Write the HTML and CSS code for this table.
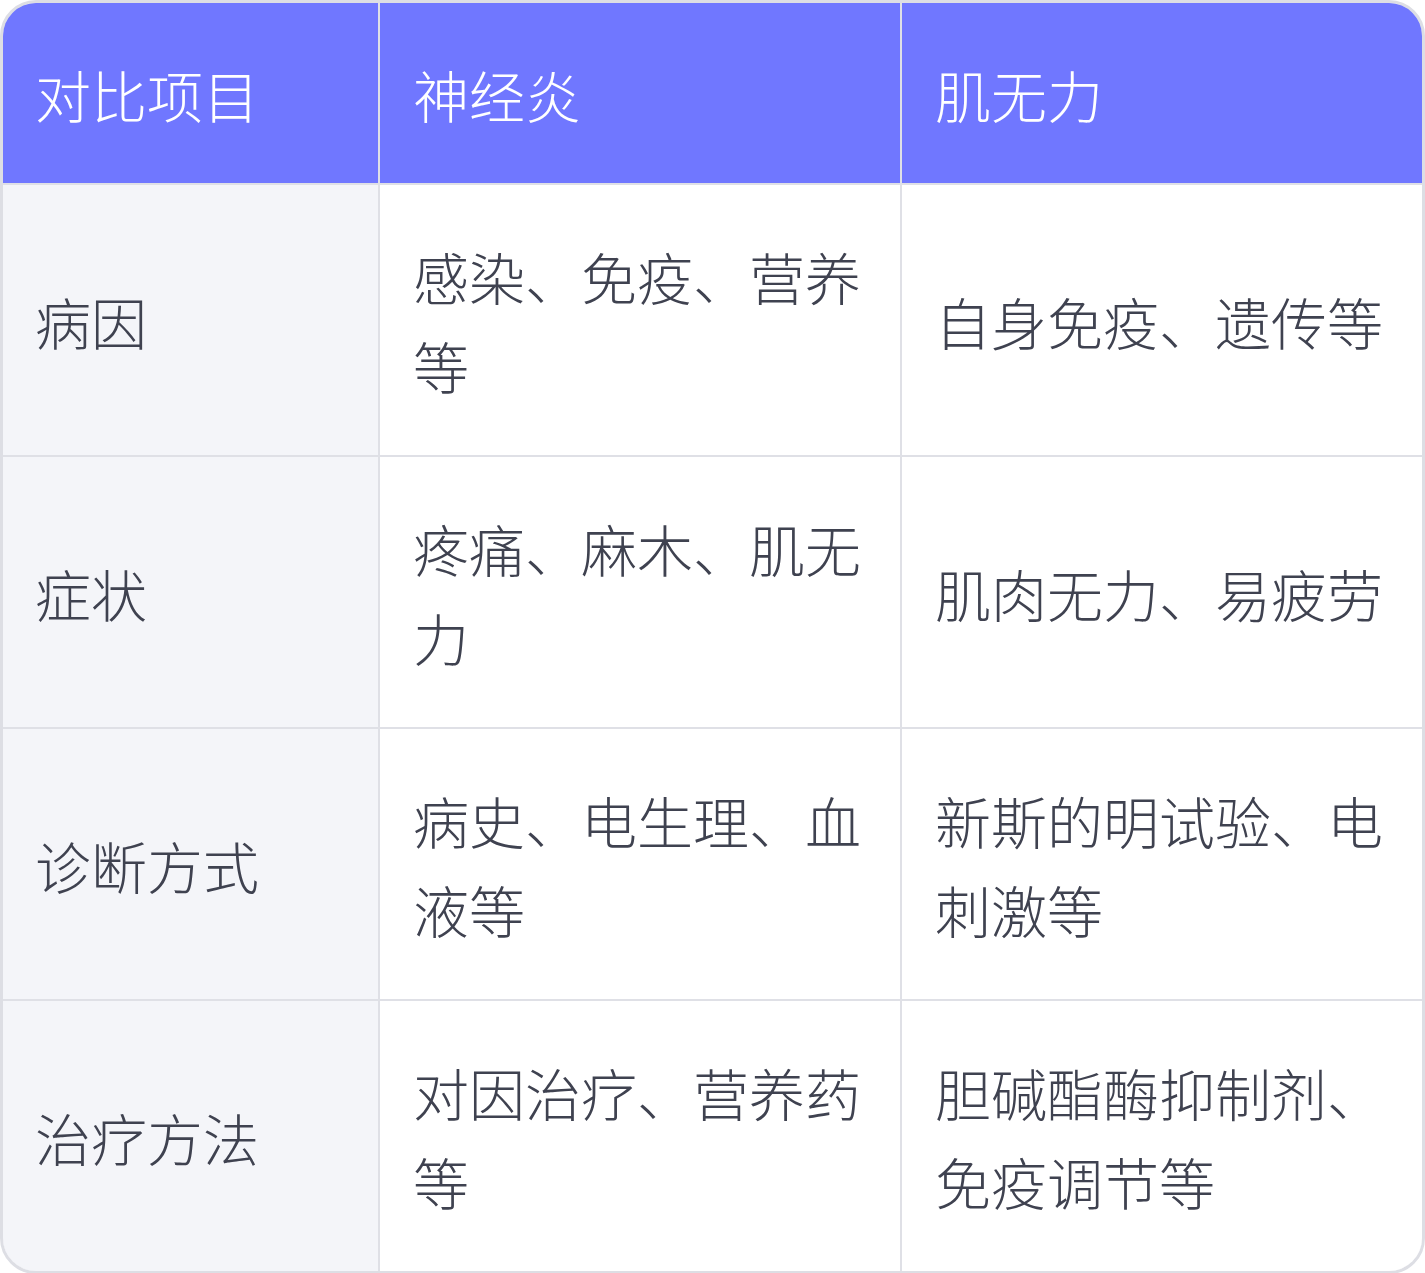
FILE: index.html
```html
<!DOCTYPE html>
<html lang="zh-CN">
<head>
<meta charset="utf-8">
<title>神经炎与肌无力对比</title>
<link rel="stylesheet" href="styles.css">
</head>
<body>
<div class="table-wrap">
  <div class="grid">
    <div class="cell head">对比项目</div>
    <div class="cell head">神经炎</div>
    <div class="cell head">肌无力</div>

    <div class="cell label">病因</div>
    <div class="cell">感染、免疫、营养等</div>
    <div class="cell">自身免疫、遗传等</div>

    <div class="cell label">症状</div>
    <div class="cell">疼痛、麻木、肌无力</div>
    <div class="cell">肌肉无力、易疲劳</div>

    <div class="cell label">诊断方式</div>
    <div class="cell">病史、电生理、血液等</div>
    <div class="cell">新斯的明试验、电刺激等</div>

    <div class="cell label">治疗方法</div>
    <div class="cell">对因治疗、营养药等</div>
    <div class="cell">胆碱酯酶抑制剂、免疫调节等</div>
  </div>
</div>
</body>
</html>
```

FILE: styles.css
```css
html, body {
  margin: 0;
  padding: 0;
  background: #ffffff;
}

.table-wrap {
  width: 1425px;
  box-sizing: border-box;
  border: 3px solid #dddee4;
  border-radius: 36px;
  overflow: hidden;
  font-family: "Noto Sans CJK SC", "Noto Sans", sans-serif;
  font-weight: 300;
}

.grid {
  display: grid;
  grid-template-columns: 375px 520px 520px;
  grid-auto-rows: 270px;
  grid-template-rows: 180px;
  gap: 2px;
  background: #dfe0e6;
}

.cell {
  background: #ffffff;
  color: #3f4250;
  font-size: 56px;
  line-height: 89px;
  padding: 0 30px 0 33px;
  display: flex;
  align-items: center;
}

.cell.label {
  background: #f4f5f9;
  padding-left: 32px;
}

.cell.head {
  background: #7077ff;
  color: #ffffff;
}

.cell.head:first-child {
  padding-left: 32px;
}
```
